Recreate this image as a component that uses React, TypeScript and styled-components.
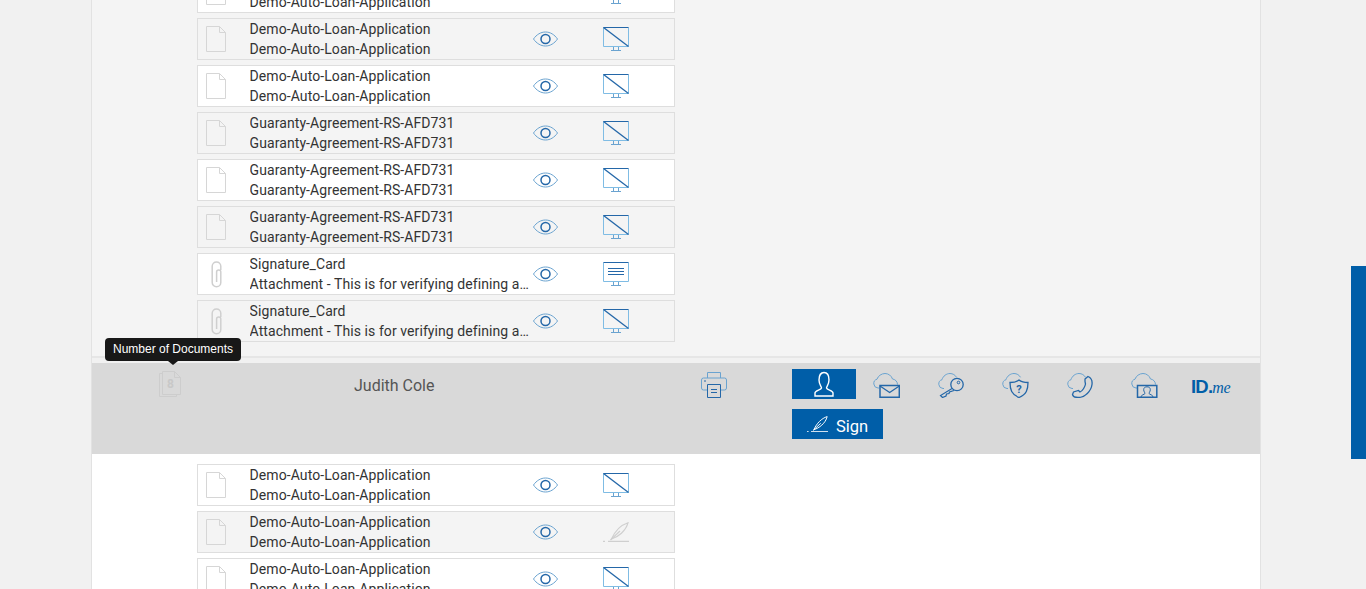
import React from "react";
import styled, { createGlobalStyle } from "styled-components";

const BLUE = "#005ea8";
const LINE = "#2467a8";
const SOFT = "#6aa3d0";

const GlobalStyle = createGlobalStyle`
  html, body {
    margin: 0;
    height: 589px;
    overflow: hidden;
    background: #f1f1f1;
    font-family: Roboto, "Liberation Sans", sans-serif;
  }
`;

type DocRow = {
  icon: "doc" | "clip";
  title: string;
  subtitle: string;
  status: "off" | "on" | "sign";
};

const demo = (status: DocRow["status"] = "off"): DocRow => ({
  icon: "doc",
  title: "Demo-Auto-Loan-Application",
  subtitle: "Demo-Auto-Loan-Application",
  status,
});

const guaranty = (): DocRow => ({
  icon: "doc",
  title: "Guaranty-Agreement-RS-AFD731",
  subtitle: "Guaranty-Agreement-RS-AFD731",
  status: "off",
});

const card = (status: DocRow["status"]): DocRow => ({
  icon: "clip",
  title: "Signature_Card",
  subtitle: "Attachment - This is for verifying defining and assigning signers",
  status,
});

const topRows = [demo(), demo(), demo(), guaranty(), guaranty(), guaranty(), card("on"), card("off")];
const bottomRows = [demo(), demo("sign"), demo()];

const DocIcon = () => (
  <svg width="20" height="26" viewBox="0 0 20 26" fill="none" stroke="#d6d6d6" strokeWidth="1">
    <path d="M.5.5h13l6 6v19H.5z" fill="currentColor" />
    <path d="M13.5.5v6h6" />
  </svg>
);

const ClipIcon = () => (
  <svg width="11" height="27" viewBox="0 0 11 27" fill="none" stroke="#cfcfcf" strokeWidth="1.500">
    <path d="M9.800 9V5.200a4.300 4.300 0 0 0-8.600 0V21.500a4.300 4.300 0 0 0 8.600 0V11a2.100 2.100 0 0 0-4.200 0v10" />
  </svg>
);

const EyeIcon = () => (
  <svg width="25" height="16" viewBox="0 0 25 16" fill="none">
    <path d="M.5 8C3.500 3.600 7.800 1 12.500 1s9 2.600 12 7c-3 4.400-7.300 7-12 7S3.500 12.400.5 8z" stroke={SOFT} />
    <circle cx="12.500" cy="8" r="4.500" stroke={LINE} strokeWidth="1.500" />
  </svg>
);

const MonitorIcon = ({ status }: { status: DocRow["status"] }) => (
  <svg width="26" height="24" viewBox="0 0 26 24" fill="none">
    <path d="M.5 19.500h25M.5.500v19M25.500.500v19" stroke="#7fbce4" />
    <path d="M.5.500h25" stroke={LINE} />
    {status === "off" && <path d="M.5.500l25 19" stroke={LINE} strokeWidth="1.300" />}
    {status === "on" && <path d="M5 6.500h16M5 9.500h16M5 12.500h16" stroke={LINE} />}
    <path d="M10.500 20v3M15.500 20v3M8 23.500h10" stroke={SOFT} />
  </svg>
);

const QuillIcon = ({ color, width }: { color: string; width: number }) => (
  <svg width={width} height={(width * 20) / 26} viewBox="0 0 26 20" fill="none" stroke={color} strokeWidth="1.200">
    <path d="M25 .7C18 3 12 9 8.500 17 15 15 23 9 25 .7z" />
    <path d="M7.500 18L17 9" />
    <path d="M0 19.400h2M5 19.400h21" />
  </svg>
);

const PrinterIcon = () => (
  <svg width="26" height="27" viewBox="0 0 26 27" fill="none">
    <path d="M6.500 7V1.500h13V7" stroke={SOFT} />
    <path d="M6 19H2.500a2 2 0 0 1-2-2V9a2 2 0 0 1 2-2h21a2 2 0 0 1 2 2v8a2 2 0 0 1-2 2H20" stroke={SOFT} />
    <path d="M3 10h2" stroke={LINE} />
    <path d="M6.500 13.500h13v13h-13z" stroke={LINE} />
    <path d="M10 18.500h6M10 21.500h6" stroke={LINE} />
  </svg>
);

const wideCloud = "M6 15H5a4.500 4.500 0 0 1-1-8.800C5 3 8.500.5 12 .5c3.500 0 6.500 2.300 7.500 5.500 2.500.2 5 2.500 5 5.500";
const shortCloud = "M6 15.500H5a4.500 4.500 0 0 1-1-8.800C5 3 8.500.5 12 .5c2.800 0 5.200 1.500 6.500 3.800";

const CloudMailIcon = () => (
  <svg width="27" height="25" viewBox="0 0 27 25" fill="none">
    <path d={wideCloud} stroke={SOFT} />
    <path d="M7 12.500h19.300v11.800H7z" stroke={LINE} strokeWidth="1.500" />
    <path d="M7 13l9.650 6.500L26.300 13" stroke={LINE} strokeWidth="1.200" />
  </svg>
);

const CloudKeyIcon = () => (
  <svg width="27" height="25" viewBox="0 0 27 25" fill="none">
    <path d={shortCloud} stroke={SOFT} />
    <circle cx="19" cy="11.500" r="6.200" stroke={LINE} strokeWidth="1.300" />
    <circle cx="20.500" cy="9.500" r="1.300" stroke={LINE} />
    <path d="M14 15.500L2.500 22.500l2 2 3.500-1.500.5-2 2.500-.5.5-1.500 4.500-1.500" stroke={LINE} strokeWidth="1.200" />
  </svg>
);

const CloudShieldIcon = () => (
  <svg width="27" height="25" viewBox="0 0 27 25" fill="none">
    <path d={shortCloud} stroke={SOFT} />
    <path
      d="M17 7c2.500 2 5.500 2.500 9 2.500 0 7-1.500 12-9 15C9.500 21.500 8 16.500 8 9.500c3.500 0 6.500-.5 9-2.500z"
      fill="#d9d9d9"
      stroke={LINE}
      strokeWidth="1.300"
    />
    <text x="17" y="20" fontSize="11" fontWeight="700" textAnchor="middle" fill={LINE} fontFamily="Roboto, sans-serif">
      ?
    </text>
  </svg>
);

const CloudPhoneIcon = () => (
  <svg width="27" height="25" viewBox="0 0 27 25" fill="none">
    <path d={shortCloud} stroke={SOFT} />
    <path
      d="M18 6l3-2.500c2.500 1 4.500 4 4 8-.8 6.500-7 13-14 13-3 0-5-1-5.500-3l1-2.500 5-1.500 1.500 1.500c2.500-1 5-5 5.500-8L18 8.500z"
      stroke={LINE}
      strokeWidth="1.300"
    />
  </svg>
);

const CloudUserIcon = () => (
  <svg width="27" height="25" viewBox="0 0 27 25" fill="none">
    <path d={wideCloud} stroke={SOFT} />
    <path d="M6.500 12.500h19.300v11.800H6.500z" stroke={LINE} strokeWidth="1.500" />
    <path
      d="M10 24c0-2.200 3.500-2.500 4-3.500.2-.6-1.300-1.800-1.300-3.800 0-1.900 1.300-2.900 3.300-2.900s3.300 1 3.300 2.900c0 2-1.500 3.200-1.300 3.800.5 1 4 1.300 4 3.500"
      stroke={LINE}
    />
  </svg>
);

const PersonIcon = () => (
  <svg width="20" height="26" viewBox="0 0 20 26" fill="none" stroke="#fff" strokeWidth="1.400">
    <path d="M1 25v-3c0-2.500 6-3 6.500-5 .3-1.200-2.500-3-2.500-8 0-4.500 2-7.500 5-7.500s5 3 5 7.500c0 5-2.800 6.800-2.500 8 .5 2 6.500 2.500 6.500 5v3z" />
  </svg>
);

const StackIcon = () => (
  <svg width="22" height="26" viewBox="0 0 22 26" fill="none" stroke="#cdcdcd">
    <path d="M3.500 2.500H.5v23h17v-2" />
    <path d="M3.500.5h12l6 6v17h-18z" />
    <path d="M15.500.5v6h6" />
  </svg>
);

const Page = styled.div`
  width: 1168px;
  height: 589px;
  margin-left: 91px;
  border-left: 1px solid #e2e2e2;
  border-right: 1px solid #e2e2e2;
  overflow: hidden;
`;

const TopPanel = styled.section`
  height: 358px;
  box-sizing: border-box;
  background: #f4f4f4;
  border-bottom: 2px solid #e6e6e6;
  overflow: hidden;
`;

const Signer = styled.header`
  position: relative;
  margin-top: 5px;
  height: 91px;
  box-sizing: border-box;
  padding-top: 6px;
  background: #d9d9d9;
  display: grid;
  grid-template-columns: 262px 347px 91px 1fr;
`;

const CountCell = styled.div`
  padding: 2px 0 0 67px;
`;

const Stack = styled.div`
  position: relative;
  width: 22px;
  height: 26px;
`;

const StackCount = styled.span`
  position: absolute;
  left: 8px;
  top: 6px;
  font-size: 12px;
  line-height: 14px;
  font-weight: 700;
  color: #c8c8c8;
`;

const Tooltip = styled.div`
  position: absolute;
  left: 13px;
  top: -25px;
  width: 136px;
  height: 23px;
  border-radius: 4px;
  background: #181818;
  color: #fff;
  font-family: "Liberation Sans", Arial, sans-serif;
  font-size: 12px;
  line-height: 22px;
  text-align: center;

  &::after {
    content: "";
    position: absolute;
    left: 63px;
    bottom: -4px;
    border-left: 5px solid transparent;
    border-right: 5px solid transparent;
    border-top: 4px solid #181818;
  }
`;

const SignerName = styled.div`
  font-size: 16px;
  line-height: 20px;
  padding-top: 7px;
  color: #555;
`;

const PrintCell = styled.div`
  padding-top: 2px;
`;

const Actions = styled.div`
  display: flex;
  flex-direction: column;
  gap: 10px;
  align-items: flex-start;
`;

const ActionRow = styled.div`
  display: flex;
  align-items: flex-start;
  height: 30px;
`;

const UserButton = styled.div`
  width: 64px;
  height: 30px;
  background: ${BLUE};
  display: flex;
  align-items: center;
  justify-content: center;
`;

const ActionIcon = styled.div`
  width: 64.500px;
  box-sizing: border-box;
  padding: 4px 0 0 17px;
`;

const IdMe = styled.div`
  margin-left: 12.500px;
  padding-top: 6px;
  color: ${BLUE};
  font-family: "Liberation Sans", sans-serif;
  font-size: 18.500px;
  line-height: 24px;
  font-weight: 700;
  letter-spacing: -0.8px;

  em {
    font-family: "Liberation Serif", serif;
    font-size: 16px;
    font-weight: 400;
    letter-spacing: -0.4px;
  }
`;

const SignButton = styled.div`
  width: 91px;
  height: 30px;
  background: ${BLUE};
  color: #fff;
  display: flex;
  align-items: center;
  gap: 8px;
  padding-left: 15px;
  box-sizing: border-box;
`;

const SignLabel = styled.span`
  font-size: 16.500px;
  padding-top: 4px;
`;

const Lower = styled.section`
  height: 135px;
  background: #fff;
  padding-top: 10px;
  box-sizing: border-box;
  overflow: hidden;
`;

const RowList = styled.div<{ $offset?: number }>`
  margin: ${(p) => p.$offset ?? 0}px 0 0 105px;
  width: 478px;
  display: flex;
  flex-direction: column;
  gap: 5px;
`;

const Row = styled.div<{ $shaded: boolean }>`
  height: 42px;
  flex: none;
  box-sizing: border-box;
  border: 1px solid #dedede;
  background: ${(p) => (p.$shaded ? "#f4f4f4" : "#fff")};
  color: ${(p) => (p.$shaded ? "#f4f4f4" : "#fff")};
  display: grid;
  grid-template-columns: 51.600px 283.400px 70px 1fr;
  align-items: center;
`;

const RowIcon = styled.div<{ $clip?: boolean }>`
  display: flex;
  padding-left: ${(p) => (p.$clip ? 13 : 8)}px;
`;

const RowText = styled.div`
  width: 280px;
  font-size: 14px;
  line-height: 20px;
  color: #333;
  letter-spacing: 0.08px;
  div {
    white-space: nowrap;
    overflow: hidden;
    text-overflow: ellipsis;
  }
`;

const RowAction = styled.div`
  display: flex;
`;

const Rows = ({ rows, startShaded, offset }: { rows: DocRow[]; startShaded: boolean; offset?: number }) => (
  <RowList $offset={offset}>
    {rows.map((row, i) => (
      <Row key={i} $shaded={i % 2 === 0 ? startShaded : !startShaded}>
        <RowIcon $clip={row.icon === "clip"}>{row.icon === "doc" ? <DocIcon /> : <ClipIcon />}</RowIcon>
        <RowText>
          <div>{row.title}</div>
          <div>{row.subtitle}</div>
        </RowText>
        <RowAction>
          <EyeIcon />
        </RowAction>
        <RowAction>
          {row.status === "sign" ? <QuillIcon color="#cfcfcf" width={26} /> : <MonitorIcon status={row.status} />}
        </RowAction>
      </Row>
    ))}
  </RowList>
);

const SideTab = styled.div`
  position: fixed;
  right: 0;
  top: 266px;
  width: 15px;
  height: 193px;
  background: ${BLUE};
`;

export default function App() {
  return (
    <>
      <GlobalStyle />
      <Page>
        <TopPanel>
          <Rows rows={topRows} startShaded={false} offset={-29} />
        </TopPanel>
        <Signer>
          <Tooltip>Number of Documents</Tooltip>
          <CountCell>
            <Stack>
              <StackIcon />
              <StackCount>8</StackCount>
            </Stack>
          </CountCell>
          <SignerName>Judith Cole</SignerName>
          <PrintCell>
            <PrinterIcon />
          </PrintCell>
          <Actions>
            <ActionRow>
              <UserButton>
                <PersonIcon />
              </UserButton>
              <ActionIcon>
                <CloudMailIcon />
              </ActionIcon>
              <ActionIcon>
                <CloudKeyIcon />
              </ActionIcon>
              <ActionIcon>
                <CloudShieldIcon />
              </ActionIcon>
              <ActionIcon>
                <CloudPhoneIcon />
              </ActionIcon>
              <ActionIcon>
                <CloudUserIcon />
              </ActionIcon>
              <IdMe>
                ID.<em>me</em>
              </IdMe>
            </ActionRow>
            <SignButton>
              <QuillIcon color="#fff" width={21} />
              <SignLabel>Sign</SignLabel>
            </SignButton>
          </Actions>
        </Signer>
        <Lower>
          <Rows rows={bottomRows} startShaded={false} />
        </Lower>
      </Page>
      <SideTab />
    </>
  );
}
